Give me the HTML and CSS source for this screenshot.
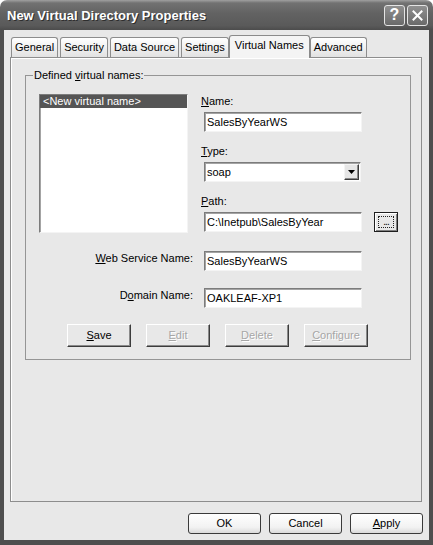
FILE: index.html
```html
<!DOCTYPE html>
<html lang="en">
<head>
    <meta charset="UTF-8">
    <meta name="viewport" content="width=device-width, initial-scale=1.0">
    <title>New Virtual Directory Properties</title>
    <link rel="stylesheet" href="styles.css">
</head>
<body>
    <div class="window">
        <div class="titlebar">
            <span class="title">New Virtual Directory Properties</span>
            <div class="caption-buttons">
                <span class="cap-btn">?</span>
                <span class="cap-btn">
                    <svg width="11" height="11" viewBox="0 0 11 11">
                        <path d="M1.5 1.5 L9.5 9.5 M9.5 1.5 L1.5 9.5" stroke="#fff" stroke-width="2" stroke-linecap="square"/>
                    </svg>
                </span>
            </div>
        </div>

        <div class="frame">
            <div class="tabs">
                <div class="tab">General</div>
                <div class="tab">Security</div>
                <div class="tab">Data Source</div>
                <div class="tab">Settings</div>
                <div class="tab active">Virtual Names</div>
                <div class="tab">Advanced</div>
            </div>

            <div class="panel">
                <fieldset class="group">
                    <legend>Defined <u>v</u>irtual names:</legend>

                    <div class="group-top">
                        <div class="listbox">
                            <div class="list-item selected">&lt;New virtual name&gt;</div>
                        </div>

                        <div class="fields">
                            <label class="field-label"><u>N</u>ame:</label>
                            <div class="textbox">SalesByYearWS</div>

                            <label class="field-label"><u>T</u>ype:</label>
                            <div class="textbox combo">
                                <span>soap</span>
                                <span class="drop-btn">
                                    <svg width="7" height="4" viewBox="0 0 7 4"><path d="M0 0 H7 L3.5 4 Z" fill="#000"/></svg>
                                </span>
                            </div>

                            <label class="field-label"><u>P</u>ath:</label>
                            <div class="path-row">
                                <div class="textbox">C:\Inetpub\SalesByYear</div>
                                <div class="browse"><span class="focus">...</span></div>
                            </div>
                        </div>
                    </div>

                    <div class="form-row first">
                        <label><u>W</u>eb Service Name:</label>
                        <div class="textbox">SalesByYearWS</div>
                    </div>
                    <div class="form-row">
                        <label>D<u>o</u>main Name:</label>
                        <div class="textbox">OAKLEAF-XP1</div>
                    </div>

                    <div class="group-buttons">
                        <div class="btn"><u>S</u>ave</div>
                        <div class="btn disabled"><u>E</u>dit</div>
                        <div class="btn disabled"><u>D</u>elete</div>
                        <div class="btn disabled"><u>C</u>onfigure</div>
                    </div>
                </fieldset>
            </div>

            <div class="dialog-buttons">
                <div class="xp-btn">OK</div>
                <div class="xp-btn">Cancel</div>
                <div class="xp-btn"><u>A</u>pply</div>
            </div>
        </div>
    </div>
</body>
</html>
```

FILE: styles.css
```css
* {
    box-sizing: border-box;
}

body {
    margin: 0;
    background: #fff;
    font-family: "Liberation Sans", Arial, sans-serif;
    font-size: 11px;
    color: #000;
}

.window {
    width: 433px;
    height: 545px;
    display: flex;
    flex-direction: column;
}

/* title bar */
.titlebar {
    height: 30px;
    flex-shrink: 0;
    display: flex;
    align-items: center;
    justify-content: space-between;
    padding: 0 5px 0 7px;
    border-radius: 7px 7px 0 0;
    background: linear-gradient(to bottom, #a0a0a0 0, #727272 3px, #626262 45%, #5a5a5a 85%, #4c4c4c 100%);
}

.title {
    color: #fff;
    font-size: 13px;
    font-weight: bold;
    text-shadow: 1px 1px 0 #2e2e2e;
    padding-top: 1px;
}

.caption-buttons {
    display: flex;
    gap: 2px;
}

.cap-btn {
    width: 21px;
    height: 21px;
    border: 1px solid #e4e4e4;
    border-radius: 3px;
    background: linear-gradient(to bottom, #909090, #6a6a6a);
    display: flex;
    align-items: center;
    justify-content: center;
    color: #fff;
    font-size: 16px;
    font-weight: bold;
}

/* window body */
.frame {
    flex: 1;
    display: flex;
    flex-direction: column;
    background: #e8e8e8;
    border: solid #4e4e4e;
    border-width: 0 4px 5px 4px;
    padding: 5px 0 0 6px;
}

.tabs {
    display: flex;
    align-items: flex-end;
    gap: 2px;
    height: 22px;
    padding-left: 1px;
}

.tab {
    height: 20px;
    padding: 0 3px;
    line-height: 19px;
    border: 1px solid #8d8d8d;
    border-bottom: 0;
    border-radius: 3px 3px 0 0;
    background: linear-gradient(to bottom, #ffffff, #e2e2e2);
    white-space: nowrap;
}

.tab.active {
    position: relative;
    z-index: 1;
    height: 23px;
    margin: 0 -2px -1px;
    padding: 0 5px;
    line-height: 18px;
    background: #f4f4f4;
    border-color: #8a8a8a;
}

.panel {
    width: 412px;
    height: 445px;
    border: 1px solid #8d8d8d;
    box-shadow: inset 1px 1px 0 #fff;
    padding: 11px 0 0 14px;
}

/* group box */
.group {
    width: 384px;
    margin: 0;
    padding: 0 12px 12px 13px;
    border: 1px solid #959595;
}

.group legend {
    margin-left: -6px;
    padding: 0 1px;
    line-height: 13px;
}

.group-top {
    display: flex;
    gap: 13px;
    margin-top: 12px;
}

.listbox {
    width: 149px;
    height: 139px;
    background: #fff;
    border: 1px solid;
    border-color: #7c7c7c #f4f4f4 #f4f4f4 #7c7c7c;
    box-shadow: inset 1px 1px 0 #a4a4a4;
}

.list-item {
    line-height: 13px;
    padding-left: 3px;
}

.list-item.selected {
    background: #555;
    color: #fff;
}

.fields {
    display: flex;
    flex-direction: column;
    width: 197px;
}

.field-label {
    display: block;
    line-height: 14px;
    margin-bottom: 4px;
}

.textbox {
    width: 158px;
    height: 20px;
    margin-left: 3px;
    margin-bottom: 12px;
    padding: 0 2px;
    line-height: 18px;
    background: #fff;
    border: 1px solid;
    border-color: #7c7c7c #f4f4f4 #f4f4f4 #7c7c7c;
    box-shadow: inset 1px 1px 0 #a4a4a4;
    white-space: nowrap;
}

.combo {
    width: 157px;
    display: flex;
    align-items: center;
    justify-content: space-between;
    padding-right: 1px;
}

.drop-btn {
    width: 15px;
    height: 16px;
    display: flex;
    align-items: center;
    justify-content: center;
    background: #e6e6e6;
    border: 1px solid;
    border-color: #f4f4f4 #3c3c3c #3c3c3c #f4f4f4;
    box-shadow: inset -1px -1px 0 #8a8a8a;
}

.fields > :last-child {
    margin-bottom: 0;
}

.path-row {
    display: flex;
    align-items: flex-start;
}

.path-row .textbox {
    margin-bottom: 0;
}

.browse {
    width: 24px;
    height: 20px;
    margin-left: 12px;
    padding: 3px;
    display: flex;
    background: #e8e8e8;
    border: 1px solid #1e1e1e;
    box-shadow: inset 1px 1px 0 #fff, inset -1px -1px 0 #808080;
}

.browse .focus {
    flex: 1;
    border: 1px dotted #222;
    font-size: 10px;
    line-height: 9px;
    text-align: center;
    letter-spacing: -1px;
}

.form-row {
    display: flex;
    align-items: flex-start;
    margin-top: 17px;
}

.form-row.first {
    margin-top: 18px;
}

.form-row label {
    width: 154px;
    margin-right: 8px;
    text-align: right;
    line-height: 14px;
}

.form-row .textbox {
    margin-bottom: 0;
}

.group-buttons {
    display: flex;
    gap: 15px;
    margin: 16px 0 0 28px;
}

.btn {
    width: 64px;
    height: 23px;
    line-height: 21px;
    text-align: center;
    background: #e8e8e8;
    border: 1px solid;
    border-color: #fff #3c3c3c #3c3c3c #fff;
    box-shadow: inset -1px -1px 0 #8a8a8a;
}

.btn.disabled {
    color: #a6a6a6;
    text-shadow: 1px 1px 0 #fff;
}

/* OK / Cancel / Apply */
.dialog-buttons {
    display: flex;
    justify-content: flex-end;
    gap: 8px;
    margin-top: 11px;
    padding-right: 6px;
}

.xp-btn {
    width: 73px;
    height: 21px;
    line-height: 19px;
    text-align: center;
    border: 1px solid #3a3a3a;
    border-radius: 3px;
    background: linear-gradient(to bottom, #ffffff, #f2f2f2 70%, #dadada);
}
```
